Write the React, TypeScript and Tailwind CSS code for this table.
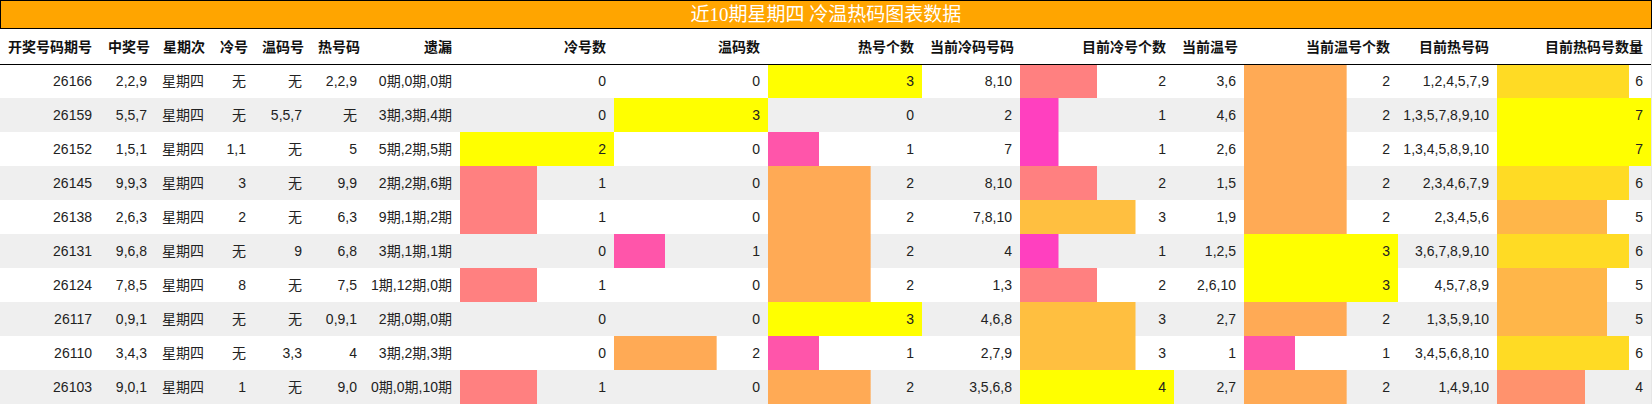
const heads = [
  "开奖号码期号", "中奖号", "星期次", "冷号", "温码号", "热号码", "遗漏",
  "冷号数", "温码数", "热号个数", "当前冷码号码", "目前冷号个数", "当前温号",
  "当前温号个数", "目前热号码", "目前热码号数量",
]

const widths = [100, 55, 57, 42, 56, 55, 95, 154, 154, 154, 98, 154, 70, 154, 99, 154]

// column index -> max value for bar columns
const barMax: Record<number, number> = { 7: 2, 8: 3, 9: 3, 11: 4, 13: 3, 15: 7 }

const rows: (string | number)[][] = [
  ["26166", "2,2,9", "星期四", "无", "无", "2,2,9", "0期,0期,0期", 0, 0, 3, "8,10", 2, "3,6", 2, "1,2,4,5,7,9", 6],
  ["26159", "5,5,7", "星期四", "无", "5,5,7", "无", "3期,3期,4期", 0, 3, 0, "2", 1, "4,6", 2, "1,3,5,7,8,9,10", 7],
  ["26152", "1,5,1", "星期四", "1,1", "无", "5", "5期,2期,5期", 2, 0, 1, "7", 1, "2,6", 2, "1,3,4,5,8,9,10", 7],
  ["26145", "9,9,3", "星期四", "3", "无", "9,9", "2期,2期,6期", 1, 0, 2, "8,10", 2, "1,5", 2, "2,3,4,6,7,9", 6],
  ["26138", "2,6,3", "星期四", "2", "无", "6,3", "9期,1期,2期", 1, 0, 2, "7,8,10", 3, "1,9", 2, "2,3,4,5,6", 5],
  ["26131", "9,6,8", "星期四", "无", "9", "6,8", "3期,1期,1期", 0, 1, 2, "4", 1, "1,2,5", 3, "3,6,7,8,9,10", 6],
  ["26124", "7,8,5", "星期四", "8", "无", "7,5", "1期,12期,0期", 1, 0, 2, "1,3", 2, "2,6,10", 3, "4,5,7,8,9", 5],
  ["26117", "0,9,1", "星期四", "无", "无", "0,9,1", "2期,0期,0期", 0, 0, 3, "4,6,8", 3, "2,7", 2, "1,3,5,9,10", 5],
  ["26110", "3,4,3", "星期四", "无", "3,3", "4", "3期,2期,3期", 0, 2, 1, "2,7,9", 3, "1", 1, "3,4,5,6,8,10", 6],
  ["26103", "9,0,1", "星期四", "1", "无", "9,0", "0期,0期,10期", 1, 0, 2, "3,5,6,8", 4, "2,7", 2, "1,4,9,10", 4],
]

// bar colour runs from magenta-pink to yellow as the value nears the column max
function barStyle(v: number, max: number) {
  if (!v) return undefined
  const t = v / max
  const c = `rgb(255,${Math.round(255 * t)},${Math.round(255 * (1 - t))})`
  return {
    backgroundImage: `linear-gradient(${c},${c})`,
    backgroundSize: `${t * 100}% 100%`,
    backgroundRepeat: "no-repeat",
  }
}

export default function App() {
  return (
    <div className="w-[1652px] bg-white text-[#222]" style={{ fontFamily: '"Liberation Sans", "Noto Sans CJK SC", sans-serif' }}>
      {/* TITLE */}
      <div
        className="h-[29px] border border-black bg-[#ffa500] text-white text-[19px] leading-[27px] text-center"
        style={{ fontFamily: '"Liberation Serif", "Noto Sans CJK SC", serif' }}
      >
        近10期星期四 冷温热码图表数据
      </div>

      {/* TABLE */}
      <div className="border-r border-[#e6e6e6]">
        <table className="table-fixed border-collapse w-[1651px] text-[14px]">
          <colgroup>
            {widths.map((w, i) => (
              <col key={i} style={{ width: w }} />
            ))}
          </colgroup>
          <thead>
            <tr className="h-[35px] border-b border-black">
              {heads.map((h) => (
                <th key={h} className="px-2 pt-[3px] text-right font-bold text-[#111] whitespace-nowrap">
                  {h}
                </th>
              ))}
            </tr>
          </thead>
          <tbody>
            {rows.map((r, ri) => (
              <tr key={ri} className={ri % 2 ? "h-[34px] bg-[#efefef]" : "h-[34px] bg-white"}>
                {r.map((v, ci) => (
                  <td
                    key={ci}
                    className="p-0 pr-2 text-right whitespace-nowrap"
                    style={barMax[ci] ? barStyle(v as number, barMax[ci]) : undefined}
                  >
                    {v}
                  </td>
                ))}
              </tr>
            ))}
          </tbody>
        </table>
      </div>
    </div>
  )
}
